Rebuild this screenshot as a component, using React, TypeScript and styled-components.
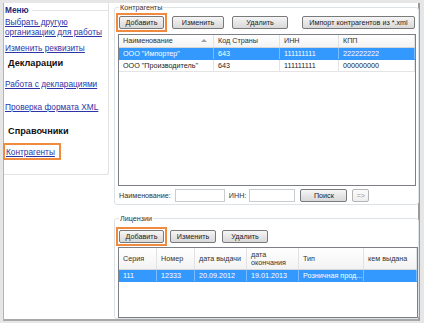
import React from "react";
import styled, { createGlobalStyle, css } from "styled-components";

const Global = createGlobalStyle`
  html, body { margin: 0; padding: 0; background: #ffffff; }
  body { font-family: "Liberation Sans", Arial, sans-serif; }
  * { box-sizing: border-box; }
`;

const Screen = styled.div`
  width: 424px;
  height: 323px;
  background: #e6e6e6;
  padding: 3px 2px 1px 3px;
  overflow: hidden;
`;

const Window = styled.div`
  width: 417px;
  height: 318px;
  background: #ffffff;
  border-left: 1px solid #b4b4b4;
  border-right: 2px solid #9a9a9a;
  border-bottom: 2px solid #a8a8a8;
  display: flex;
  gap: 5px;
`;

const Sidebar = styled.div`
  width: 105px;
  flex: none;
`;

const MenuPanel = styled.div`
  height: 172px;
  border: 1px solid #e2e2e2;
  border-top: none;
  border-left: none;
  border-radius: 0 0 3px 0;
  padding: 1px 0 0 1px;
  display: flex;
  flex-direction: column;
`;

const MenuTitle = styled.div`
  display: flex;
  align-items: center;
  gap: 3px;
  font-weight: bold;
  font-size: 8.3px;
  color: #1c2a7a;
  height: 12px;
  &::after {
    content: "";
    flex: 1;
    border-top: 1px solid #e4e4e4;
  }
`;

const MenuLink = styled.a<{ $top: number; $boxed?: boolean }>`
  display: block;
  margin-top: ${(p) => p.$top}px;
  font-size: 8.3px;
  line-height: 10px;
  color: #2b35a8;
  text-decoration: underline;
  cursor: pointer;
  ${(p) =>
    p.$boxed &&
    css`
      align-self: flex-start;
      border: 2px solid #ef8a3e;
      padding: 2px 4px 1px 1px;
      margin-left: -2px;
    `}
`;

const MenuHeading = styled.div<{ $top: number }>`
  margin-top: ${(p) => p.$top}px;
  margin-left: 3px;
  font-weight: bold;
  font-size: 9.2px;
  color: #111111;
  line-height: 12px;
`;

const Main = styled.div`
  flex: 1;
  display: flex;
  flex-direction: column;
  padding-right: 2px;
`;

const Group = styled.fieldset<{ $height: number; $top: number }>`
  margin: ${(p) => p.$top}px 0 0 0;
  padding: 0 0 0 3px;
  height: ${(p) => p.$height}px;
  border: 1px solid #dde2e6;
  border-radius: 3px;
  min-width: 0;
`;

const Legend = styled.legend`
  font-size: 7.2px;
  color: #333333;
  padding: 0 1px;
  margin-left: 1px;
  line-height: 9px;
`;

const Toolbar = styled.div<{ $gap: number; $top: number }>`
  display: flex;
  align-items: center;
  gap: ${(p) => p.$gap}px;
  height: 19px;
  margin-top: ${(p) => p.$top}px;
`;

const Highlight = styled.div`
  border: 2px solid #ef8a3e;
  padding: 1px;
  display: flex;
  margin-left: -2px;
`;

const Button = styled.button<{ $w: number }>`
  width: ${(p) => p.$w}px;
  height: 13px;
  padding: 0;
  border: 1px solid #7a7a7a;
  border-radius: 2px;
  background: linear-gradient(#f6f6f6, #e6e6e6 50%, #d9d9d9);
  font-family: "Liberation Sans", Arial, sans-serif;
  font-size: 7.2px;
  line-height: 11px;
  color: #222222;
  flex: none;
  white-space: nowrap;
  &:disabled { color: #9a9a9a; border-color: #b4b4b4; background: linear-gradient(#fbfbfb, #eeeeee); }
`;

const Grid = styled.div<{ $height: number; $width: number; $top: number }>`
  width: ${(p) => p.$width}px;
  height: ${(p) => p.$height}px;
  border: 1px solid #7c7f86;
  background: #ffffff;
  margin-top: ${(p) => p.$top}px;
  overflow: hidden;
  font-size: 7.2px;
`;

const Row = styled.div<{ $cols: string; $h: number; $sel?: boolean; $head?: boolean }>`
  display: grid;
  grid-template-columns: ${(p) => p.$cols};
  height: ${(p) => p.$h}px;
  color: ${(p) => (p.$sel ? "#ffffff" : "#222222")};
  background: ${(p) =>
    p.$sel ? "#3399ff" : p.$head ? "linear-gradient(#ffffff, #f3f3f3)" : "#ffffff"};
  border-bottom: 1px solid ${(p) => (p.$head ? "#d6d6d6" : p.$sel ? "#3399ff" : "#e4e4e4")};
`;

const Cell = styled.div<{ $head?: boolean; $sel?: boolean }>`
  display: flex;
  align-items: center;
  padding-left: 4px;
  border-right: 1px solid ${(p) => (p.$sel ? "#7bbcff" : p.$head ? "#e2e2e2" : "#e4e4e4")};
  white-space: nowrap;
  overflow: hidden;
  line-height: 8px;
  color: ${(p) => (p.$head ? "#333333" : "inherit")};
  position: relative;
`;

const SortArrow = styled.span`
  position: absolute;
  right: 6px;
  top: 4px;
  width: 0;
  height: 0;
  border-left: 3px solid transparent;
  border-right: 3px solid transparent;
  border-bottom: 3px solid #9aa0a8;
`;

const SearchRow = styled.div`
  display: flex;
  align-items: center;
  height: 15px;
  margin-top: 2px;
  font-size: 7.2px;
  color: #333333;
`;

const Label = styled.span<{ $ml: number }>`
  margin-left: ${(p) => p.$ml}px;
`;

const Input = styled.input<{ $w: number; $ml: number }>`
  width: ${(p) => p.$w}px;
  height: 13px;
  margin-left: ${(p) => p.$ml}px;
  border: 1px solid #c8cdd2;
  padding: 0;
  background: #ffffff;
`;

const SpacedButton = styled(Button)<{ $ml: number }>`
  margin-left: ${(p) => p.$ml}px;
`;

const kCols = "95px 66px 59px 1fr";
const lCols = "38px 38px 52px 52px 65px 1fr";

export default function App() {
  return (
    <>
      <Global />
      <Screen>
        <Window>
          <Sidebar>
            <MenuPanel>
              <MenuTitle>Меню</MenuTitle>
              <MenuLink $top={1}>
                Выбрать другую
                <br />
                организацию для работы
              </MenuLink>
              <MenuLink $top={6}>Изменить реквизиты</MenuLink>
              <MenuHeading $top={4}>Декларации</MenuHeading>
              <MenuLink $top={10}>Работа с декларациями</MenuLink>
              <MenuLink $top={13}>Проверка формата XML</MenuLink>
              <MenuHeading $top={13}>Справочники</MenuHeading>
              <MenuLink $top={6} $boxed>
                Контрагенты
              </MenuLink>
            </MenuPanel>
          </Sidebar>
          <Main>
            <Group $top={0} $height={202}>
              <Legend>Контрагенты</Legend>
              <Toolbar $gap={5} $top={1}>
                <Highlight>
                  <Button $w={45}>Добавить</Button>
                </Highlight>
                <Button $w={52}>Изменить</Button>
                <SpacedButton $w={56} $ml={3}>Удалить</SpacedButton>
                <SpacedButton $w={113} $ml={9}>Импорт контрагентов из *.xml</SpacedButton>
              </Toolbar>
              <Grid $width={298} $height={152} $top={2}>
                <Row $cols={kCols} $h={13} $head>
                  <Cell $head>
                    Наименование
                    <SortArrow />
                  </Cell>
                  <Cell $head>Код Страны</Cell>
                  <Cell $head>ИНН</Cell>
                  <Cell $head>КПП</Cell>
                </Row>
                <Row $cols={kCols} $h={12} $sel>
                  <Cell $sel>ООО "Импортер"</Cell>
                  <Cell $sel>643</Cell>
                  <Cell $sel>111111111</Cell>
                  <Cell $sel>222222222</Cell>
                </Row>
                <Row $cols={kCols} $h={12}>
                  <Cell>ООО "Производитель"</Cell>
                  <Cell>643</Cell>
                  <Cell>111111111</Cell>
                  <Cell>000000000</Cell>
                </Row>
              </Grid>
              <SearchRow>
                <Label $ml={1}>Наименование:</Label>
                <Input $w={50} $ml={4} />
                <Label $ml={4}>ИНН:</Label>
                <Input $w={46} $ml={3} />
                <SpacedButton $w={47} $ml={5}>Поиск</SpacedButton>
                <SpacedButton $w={17} $ml={5} disabled>
                  =&gt;
                </SpacedButton>
              </SearchRow>
            </Group>
            <Group $top={9} $height={105}>
              <Legend>Лицензии</Legend>
              <Toolbar $gap={3} $top={4}>
                <Highlight>
                  <Button $w={45}>Добавить</Button>
                </Highlight>
                <Button $w={46}>Изменить</Button>
                <SpacedButton $w={46} $ml={3}>Удалить</SpacedButton>
              </Toolbar>
              <Grid $width={300} $height={71} $top={1}>
                <Row $cols={lCols} $h={22} $head>
                  <Cell $head>Серия</Cell>
                  <Cell $head>Номер</Cell>
                  <Cell $head>дата выдачи</Cell>
                  <Cell $head>
                    дата
                    <br />
                    окончания
                  </Cell>
                  <Cell $head>Тип</Cell>
                  <Cell $head>кем выдана</Cell>
                </Row>
                <Row $cols={lCols} $h={12} $sel>
                  <Cell $sel>111</Cell>
                  <Cell $sel>12333</Cell>
                  <Cell $sel>20.09.2012</Cell>
                  <Cell $sel>19.01.2013</Cell>
                  <Cell $sel>Розничная прод...</Cell>
                  <Cell $sel></Cell>
                </Row>
              </Grid>
            </Group>
          </Main>
        </Window>
      </Screen>
    </>
  );
}
